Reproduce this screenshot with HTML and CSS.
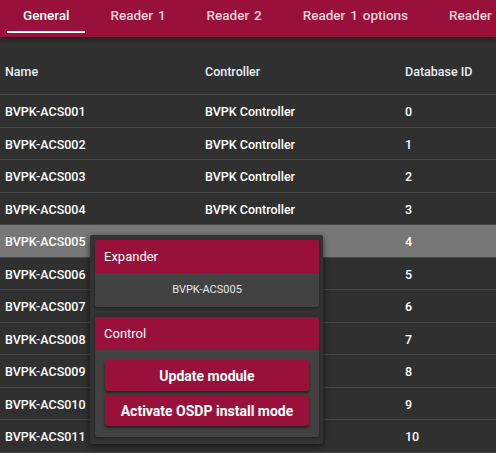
FILE: index.html
```html
<!DOCTYPE html>
<html lang="en">
<head>
    <meta charset="UTF-8">
    <title>Expanders</title>
    <link rel="stylesheet" href="styles.css">
</head>
<body>
    <div class="tabs">
        <div class="tab active">General</div>
        <div class="tab">Reader 1</div>
        <div class="tab">Reader 2</div>
        <div class="tab">Reader 1 options</div>
        <div class="tab">Reader 2 options</div>
    </div>

    <div class="table">
        <div class="row head">
            <div class="cell">Name</div>
            <div class="cell">Controller</div>
            <div class="cell">Database ID</div>
        </div>
        <div class="row"><div class="cell">BVPK-ACS001</div><div class="cell">BVPK Controller</div><div class="cell">0</div></div>
        <div class="row"><div class="cell">BVPK-ACS002</div><div class="cell">BVPK Controller</div><div class="cell">1</div></div>
        <div class="row"><div class="cell">BVPK-ACS003</div><div class="cell">BVPK Controller</div><div class="cell">2</div></div>
        <div class="row"><div class="cell">BVPK-ACS004</div><div class="cell">BVPK Controller</div><div class="cell">3</div></div>
        <div class="row selected"><div class="cell">BVPK-ACS005</div><div class="cell">BVPK Controller</div><div class="cell">4</div></div>
        <div class="row"><div class="cell">BVPK-ACS006</div><div class="cell">BVPK Controller</div><div class="cell">5</div></div>
        <div class="row"><div class="cell">BVPK-ACS007</div><div class="cell">BVPK Controller</div><div class="cell">6</div></div>
        <div class="row"><div class="cell">BVPK-ACS008</div><div class="cell">BVPK Controller</div><div class="cell">7</div></div>
        <div class="row"><div class="cell">BVPK-ACS009</div><div class="cell">BVPK Controller</div><div class="cell">8</div></div>
        <div class="row"><div class="cell">BVPK-ACS010</div><div class="cell">BVPK Controller</div><div class="cell">9</div></div>
        <div class="row"><div class="cell">BVPK-ACS011</div><div class="cell">BVPK Controller</div><div class="cell">10</div></div>
    </div>

    <div class="menu">
        <div class="card">
            <div class="card-head">Expander</div>
            <div class="card-body name">BVPK-ACS005</div>
        </div>
        <div class="card">
            <div class="card-head">Control</div>
            <div class="card-body actions">
                <button class="btn">Update module</button>
                <button class="btn">Activate OSDP install mode</button>
            </div>
        </div>
    </div>
</body>
</html>
```

FILE: styles.css
```css
* {
    margin: 0;
    padding: 0;
    box-sizing: border-box;
}

body {
    font-family: Roboto, "Liberation Sans", sans-serif;
    background: #303030;
    color: #fff;
    overflow: hidden;
    width: 496px;
    height: 453px;
}

.tabs {
    display: flex;
    height: 37px;
    background: #99113a;
    padding-left: 7px;
    white-space: nowrap;
    overflow: hidden;
    box-shadow: 0 2px 4px rgba(0, 0, 0, 0.4);
    position: relative;
    z-index: 1;
}

.tab {
    flex-shrink: 0;
    padding: 0 16px;
    line-height: 31px;
    font-size: 13.5px;
    font-weight: 500;
    word-spacing: 1.5px;
    color: rgba(255, 255, 255, 0.82);
    text-align: center;
    border-bottom: 2px solid transparent;
    height: 33px;
    margin-right: 9px;
}

.tab.active {
    color: #fff;
    border-bottom-color: #fff;
}

.table {
    margin-top: 10px;
    width: 600px;
}

.row {
    display: grid;
    grid-template-columns: 200px 200px 200px;
    height: 32.5px;
    align-items: center;
    border-bottom: 1px solid #464646;
    font-size: 12.5px;
    font-weight: 500;
}

.row.head {
    height: 48px;
    border-bottom-color: #4a4a4a;
    color: #e8eef5;
}

.row.selected {
    background: #777;
}

.cell {
    padding-left: 5px;
    padding-top: 2px;
}

.menu {
    position: absolute;
    left: 90px;
    top: 235px;
    width: 233px;
    padding: 5px 4px 7px 5px;
    background: #333;
    box-shadow: 0 2px 6px rgba(0, 0, 0, 0.6);
    border-radius: 2px;
    display: flex;
    flex-direction: column;
    gap: 10px;
}

.card {
    background: #424242;
    border-radius: 3px;
    overflow: hidden;
    box-shadow: 0 1px 3px rgba(0, 0, 0, 0.4);
}

.card-head {
    background: #99113a;
    height: 33px;
    line-height: 33px;
    padding-left: 9px;
    font-size: 13px;
}

.card-body.name {
    height: 34px;
    line-height: 34px;
    text-align: center;
    font-size: 11px;
    color: #e6e6e6;
}

.actions {
    display: flex;
    flex-direction: column;
    gap: 4px;
    padding: 10px 10px 11px 10px;
}

.btn {
    background: #99113a;
    color: #fff;
    border: none;
    border-radius: 3px;
    height: 31px;
    font-family: Roboto, "Liberation Sans", sans-serif;
    font-size: 14px;
    font-weight: bold;
    box-shadow: 0 2px 3px rgba(0, 0, 0, 0.5);
}
```
